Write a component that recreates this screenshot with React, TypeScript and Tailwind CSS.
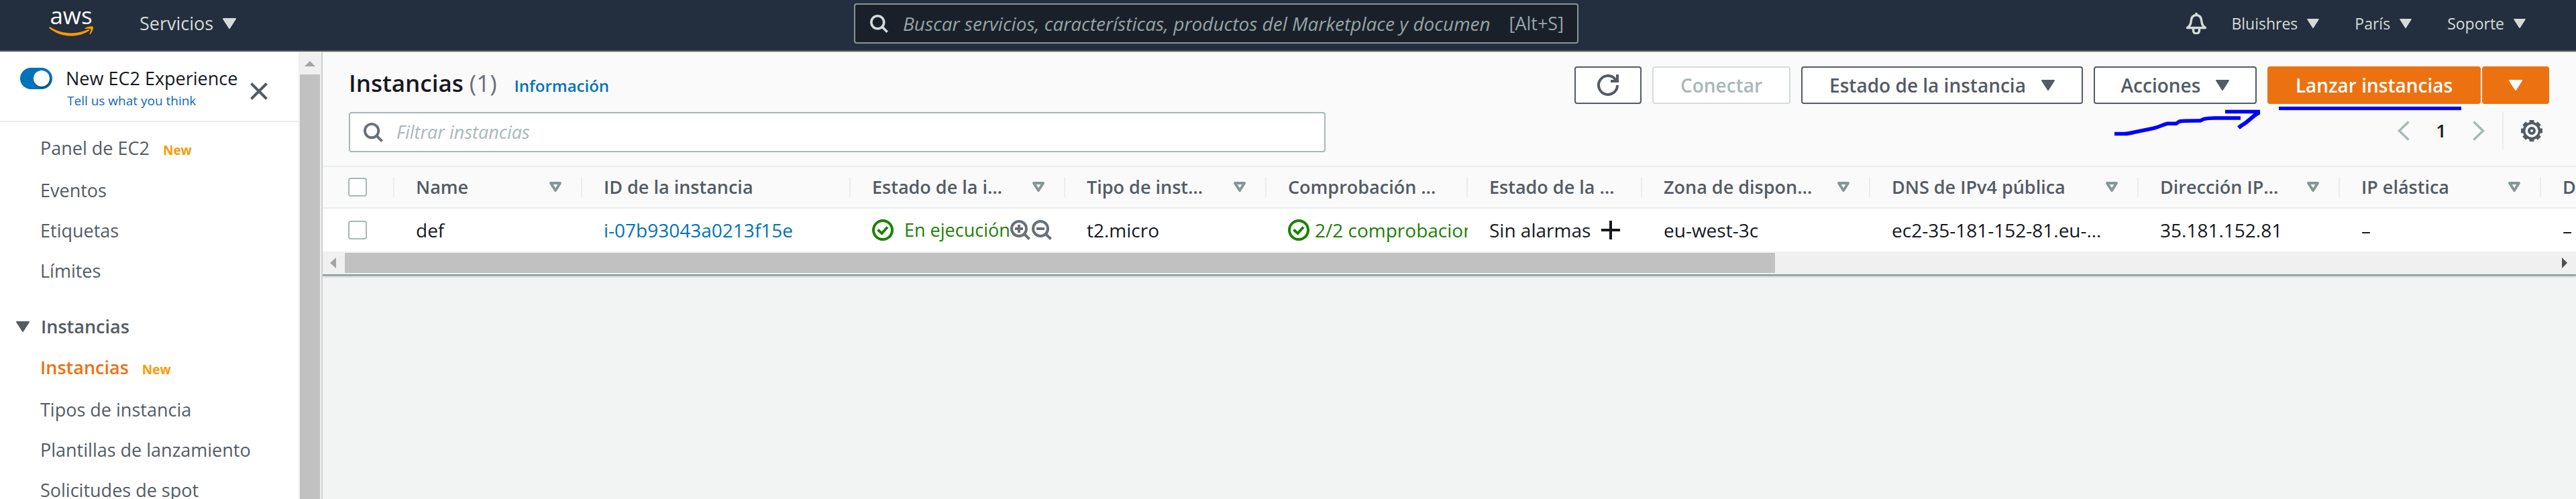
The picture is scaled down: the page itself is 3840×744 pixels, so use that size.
import type { ReactNode } from "react";

function Caret({ className = "" }: { className?: string }) {
  return (
    <svg viewBox="0 0 20 16" className={className} fill="currentColor" stroke="currentColor" strokeWidth="2" strokeLinejoin="round" aria-hidden="true">
      <path d="M1 1h18l-9 14z" />
    </svg>
  );
}

function SortIcon() {
  return (
    <svg viewBox="0 0 20 16" className="h-4 w-5 shrink-0 text-[#879596]" fill="none" stroke="currentColor" strokeWidth="4" strokeLinejoin="round" aria-hidden="true">
      <path d="M3 2h14l-7 11z" />
    </svg>
  );
}

function SearchIcon({ className = "" }: { className?: string }) {
  return (
    <svg viewBox="0 0 30 30" className={className} fill="none" stroke="currentColor" strokeWidth="4" aria-hidden="true">
      <circle cx="12.5" cy="12.5" r="10.5" />
      <path d="M20 20l8.5 8.5" />
    </svg>
  );
}

function ZoomIcon({ plus = false }: { plus?: boolean }) {
  return (
    <svg viewBox="0 0 30 30" className="h-[30px] w-[30px]" fill="none" stroke="currentColor" strokeWidth="4" aria-hidden="true">
      <circle cx="13" cy="13" r="11" />
      <path d={plus ? "M7 13h12M13 7v12M20.5 20.5l8 8" : "M7 13h12M20.5 20.5l8 8"} />
    </svg>
  );
}

function StatusOk() {
  return (
    <svg viewBox="0 0 32 32" className="h-8 w-8 shrink-0" fill="none" stroke="currentColor" strokeWidth="4" aria-hidden="true">
      <circle cx="16" cy="16" r="14" />
      <path d="M8.5 15.5l6 5.5 8.5-9.5" />
    </svg>
  );
}

function Bell() {
  return (
    <svg viewBox="0 0 32 32" className="h-8 w-8" fill="none" stroke="currentColor" strokeWidth="3.4" strokeLinejoin="round" aria-hidden="true">
      <path d="M16 0v4" />
      <path d="M2.5 22.5c3-2 5-4 5.500-9C8.500 7 11 3.500 16 3.500S23.500 7 24 13.500c.5 5 2.500 7 5.500 9z" />
      <path d="M11.500 23v3.500a4.500 4.500 0 0 0 9 0V23" />
    </svg>
  );
}

function Gear() {
  const teeth = [0, 45, 90, 135, 180, 225, 270, 315];
  return (
    <svg viewBox="0 0 32 32" className="h-8 w-8" fill="none" stroke="currentColor" aria-hidden="true">
      <circle cx="16" cy="16" r="11.500" strokeWidth="3.600" />
      <circle cx="16" cy="16" r="4" strokeWidth="4" />
      {teeth.map((a) => (
        <path key={a} d="M12.500 1.800h7" strokeWidth="3.600" transform={`rotate(${a} 16 16)`} />
      ))}
    </svg>
  );
}

function Refresh() {
  return (
    <svg viewBox="0 0 32 32" className="h-8 w-8" fill="none" stroke="currentColor" strokeWidth="4" aria-hidden="true">
      <path d="M30 16A14 14 0 1 1 26.500 6.700L29 10" />
      <path d="M30 0v10H20" />
    </svg>
  );
}

function NavMenu({ label, large = false }: { label: string; large?: boolean }) {
  return (
    <button type="button" className={large ? "flex items-center gap-[14px] text-[27px]" : "flex items-center gap-[14px] text-[23px]"}>
      {label}
      <Caret className={large ? "h-4 w-5" : "h-[14px] w-[18px]"} />
    </button>
  );
}

function TopNav() {
  return (
    <header className="flex h-[77px] items-start border-b-2 border-[#545b64] bg-[#232f3e] text-[#d5dbdb]">
      <div className="flex flex-[1273_1_0px] items-start">
        <a href="#inicio" aria-label="aws" className="ml-[73px] flex w-[66px] flex-col items-center pt-[7px]">
          <span className="text-[35px] leading-8 font-medium text-white">aws</span>
          <svg viewBox="0 0 66 16" className="h-4 w-[66px]" fill="#ff9900" aria-hidden="true">
            <path d="M0 2.500C.2 1 1.200.8 2.500 1.600 20 13 42 12.500 58 5c2-.8 3 .8 1.500 2C43 18 17 17.500 0 2.500z" />
            <path d="M53.500 3c3.500-3 11.500-3.500 12.300-2 .7 1.800-1 8.500-4.300 11-.7.500-1.400.2-1-.6 1-2.400 2.500-6 1.800-7-.9-1-4.800-.6-7.800-.4-1 .1-1.400-.5-1-1z" />
          </svg>
        </a>
        <div className="ml-[69px] flex h-[70px] items-center">
          <NavMenu label="Servicios" large />
        </div>
      </div>
      <label className="mt-[5px] flex h-[60px] w-[1080px] items-center rounded-[4px] border-2 border-[#879596] bg-[#1a2029] pr-[20px] pl-[22px]">
        <SearchIcon className="h-[27px] w-[27px] shrink-0 text-[#d5dbdb]" />
        <input
          type="text"
          aria-label="Buscar servicios"
          placeholder="Buscar servicios, características, productos del Marketplace y documentos"
          className="ml-[22px] min-w-0 flex-1 bg-transparent text-[28px] outline-none placeholder:text-[#95a5a6] placeholder:italic"
        />
        <span className="ml-7 text-[27px] text-[#95a5a6]">[Alt+S]</span>
      </label>
      <nav className="flex-[1487_1_0px]">
        <div className="flex h-[70px] items-center justify-end pr-[75px]">
          <button type="button" aria-label="Notificaciones" className="mr-[36px]">
            <Bell />
          </button>
          <div className="flex gap-[53px]">
            <NavMenu label="Bluishres" />
            <NavMenu label="París" />
            <NavMenu label="Soporte" />
          </div>
        </div>
      </nav>
    </header>
  );
}

function SideLink({ label, isNew = false, active = false }: { label: string; isNew?: boolean; active?: boolean }) {
  return (
    <li className={isNew ? "h-[63px] leading-[60px]" : "h-[60px] leading-[60px]"}>
      <a href={`#${label}`} className={active ? "font-semibold text-[#ec7211]" : "text-[#545b64]"}>
        {label}
      </a>
      {isNew && <span className="ml-[20px] text-[19px] font-bold text-[#ff9900]">New</span>}
    </li>
  );
}

function Sidebar() {
  return (
    <div className="flex w-[481px] shrink-0 border-r-2 border-[#ced3d3] bg-white">
      <aside className="min-w-0 flex-1 whitespace-nowrap">
        <div className="flex h-[105px] border-b-2 border-[#eaeded] pt-6 pl-[30px]">
          <label className="relative h-8 w-12 shrink-0">
            <input type="checkbox" defaultChecked aria-label="New EC2 Experience" className="peer sr-only" />
            <span className="flex h-8 w-12 justify-end rounded-full bg-[#0073bb] p-1">
              <span className="h-6 w-6 rounded-full bg-white shadow-[1px_2px_2px_#00456f]" />
            </span>
          </label>
          <div className="ml-5">
            <p className="text-[27px] leading-8 text-[#16191f]">New EC2 Experience</p>
            <a href="#opinion" className="block pl-[2px] text-[19px] leading-[34px] text-[#1166bb]">
              Tell us what you think
            </a>
          </div>
          <button type="button" aria-label="Cerrar" className="mt-[22px] mr-[46px] ml-auto h-[26px] w-[26px] text-[#545b64]">
            <svg viewBox="0 0 26 26" className="h-[26px] w-[26px]" fill="none" stroke="currentColor" strokeWidth="4" aria-hidden="true">
              <path d="M1.500 1.500l23 23M24.500 1.500l-23 23" />
            </svg>
          </button>
        </div>
        <nav className="text-[27px]">
          <ul className="pt-[9px] pl-[60px]">
            <SideLink label="Panel de EC2" isNew />
            <SideLink label="Eventos" />
            <SideLink label="Etiquetas" />
            <SideLink label="Límites" />
          </ul>
          <button type="button" className="mt-[22px] flex h-[62px] items-center gap-[17px] pl-6 font-semibold text-[#545b64]">
            <Caret className="h-4 w-5" />
            Instancias
          </button>
          <ul className="pl-[60px]">
            <SideLink label="Instancias" isNew active />
            <SideLink label="Tipos de instancia" />
            <SideLink label="Plantillas de lanzamiento" />
            <SideLink label="Solicitudes de spot" />
          </ul>
        </nav>
      </aside>
      <div className="flex w-[34px] flex-col items-center bg-[#f0f0f0]">
        <svg viewBox="0 0 16 8" className="mt-[14px] mb-3 h-2 w-4" fill="#a3a3a3" aria-hidden="true">
          <path d="M8 0l8 8H0z" />
        </svg>
        <div className="w-[30px] flex-1 bg-[#c1c1c1]" />
      </div>
    </div>
  );
}

function ActionButton({ children, disabled = false, label, className }: { children: ReactNode; disabled?: boolean; label?: string; className: string }) {
  return (
    <button
      type="button"
      disabled={disabled}
      aria-label={label}
      className={
        (disabled ? "border-[#d5dbdb] text-[#aab7b8] " : "border-[#545b64] text-[#545b64] ") +
        "flex h-14 items-center justify-center gap-[23px] rounded-[4px] border-2 bg-white text-[28px] font-semibold whitespace-nowrap " +
        className
      }
    >
      {children}
    </button>
  );
}

function Chevron({ next = false }: { next?: boolean }) {
  return (
    <svg viewBox="0 0 18 30" className="h-[30px] w-[18px]" fill="none" stroke="#aab7b8" strokeWidth="3.500" aria-hidden="true">
      <path d={next ? "M1.500 1.500L15.500 15l-14 13.500" : "M16.500 1.500L2.500 15l14 13.500"} />
    </svg>
  );
}

function PanelHeader() {
  return (
    <div className="bg-[#fafafa] pr-10 pl-[39px]">
      <div className="relative flex h-[88px] items-start justify-between pt-5">
        <h1 className="flex items-baseline text-[35px] leading-[50px] font-semibold text-[#16191f]">
          Instancias
          <span className="ml-[9px] font-normal text-[#687078]">(1)</span>
          <a href="#info" className="ml-[26px] text-[24px] text-[#0073bb]">
            Información
          </a>
        </h1>
        <div className="flex gap-4">
          <ActionButton label="Actualizar" className="w-[100px]">
            <Refresh />
          </ActionButton>
          <ActionButton disabled className="w-[206px]">
            Conectar
          </ActionButton>
          <ActionButton className="w-[420px]">
            Estado de la instancia
            <Caret className="h-4 w-5" />
          </ActionButton>
          <ActionButton className="w-[243px]">
            Acciones
            <Caret className="h-4 w-5" />
          </ActionButton>
          <div className="flex gap-[2px] text-white">
            <button type="button" className="h-14 w-[318px] rounded-[4px] bg-[#ec7211] text-[28px] font-semibold whitespace-nowrap">
              Lanzar instancias
            </button>
            <button type="button" aria-label="Más opciones de lanzamiento" className="flex h-14 w-[100px] items-center justify-center rounded-[4px] bg-[#ec7211]">
              <Caret className="h-4 w-5" />
            </button>
          </div>
        </div>
        <svg viewBox="0 0 520 46" className="absolute top-[80px] right-[130px] h-[46px] w-[520px]" fill="none" stroke="#0000ff" strokeWidth="5.500" aria-hidden="true">
          <path d="M247 2.500h272" />
          <path d="M2 40.500h14c6 0 10-1 16-2.500l27-5.500c10-2 14-5.500 22-7.200h13l5-3.300c8-1.200 20-1 31-1l5-2.500c9-2 15-1.500 22-1.500h33" />
          <path d="M167 7.500h52" />
          <path d="M218 8.500l-7 4.500-12 10c-5 4-7 4-12 8.500" strokeWidth="6" />
        </svg>
      </div>
      <div className="flex h-[80px] items-start justify-between">
        <label className="flex h-[60px] w-[1456px] items-center rounded-[4px] border-2 border-[#aab7b8] bg-white px-5">
          <SearchIcon className="h-[29px] w-[29px] shrink-0 text-[#687078]" />
          <input
            type="text"
            aria-label="Filtrar instancias"
            placeholder="Filtrar instancias"
            className="ml-[20px] min-w-0 flex-1 bg-transparent text-[27px] outline-none placeholder:text-[#aab7b8] placeholder:italic"
          />
        </label>
        <div className="flex h-14 items-center pr-[10px]">
          <button type="button" aria-label="Página anterior">
            <Chevron />
          </button>
          <button type="button" className="w-[94px] text-[27px] font-semibold text-[#16191f]">
            1
          </button>
          <button type="button" aria-label="Página siguiente">
            <Chevron next />
          </button>
          <div className="ml-[26px] h-14 w-[2px] bg-[#eaeded]" />
          <button type="button" aria-label="Preferencias" className="ml-[26px] text-[#545b64]">
            <Gear />
          </button>
        </div>
      </div>
    </div>
  );
}

const columns: { label: string; width: string; sort: boolean }[] = [
  { label: "Name", width: "w-[280px]", sort: true },
  { label: "ID de la instancia", width: "w-[400px]", sort: false },
  { label: "Estado de la i…", width: "w-[320px]", sort: true },
  { label: "Tipo de inst…", width: "w-[300px]", sort: true },
  { label: "Comprobación …", width: "w-[300px]", sort: false },
  { label: "Estado de la …", width: "w-[260px]", sort: false },
  { label: "Zona de dispon…", width: "w-[340px]", sort: true },
  { label: "DNS de IPv4 pública", width: "w-[400px]", sort: true },
  { label: "Dirección IP…", width: "w-[300px]", sort: true },
  { label: "IP elástica", width: "w-[300px]", sort: true },
  { label: "D", width: "w-[300px]", sort: false },
];

const cells: ReactNode[] = [
  "def",
  <a href="#i-07b93043a0213f15e" className="text-[#0073bb]">
    i-07b93043a0213f15e
  </a>,
  <span className="flex items-center text-[#1d8102]">
    <StatusOk />
    <span className="ml-4 text-[27px]">En ejecución</span>
    <span className="flex gap-[2px] text-[#687078]">
      <button type="button" aria-label="Incluir en el filtro">
        <ZoomIcon plus />
      </button>
      <button type="button" aria-label="Excluir del filtro">
        <ZoomIcon />
      </button>
    </span>
  </span>,
  "t2.micro",
  <span className="flex items-center gap-2 text-[#1d8102]">
    <StatusOk />
    2/2 comprobaciones
  </span>,
  <span className="flex items-center gap-4">
    Sin alarmas
    <button type="button" aria-label="Agregar alarma">
      <svg viewBox="0 0 28 28" className="h-7 w-7" stroke="currentColor" strokeWidth="4" aria-hidden="true">
        <path d="M0 14h28M14 0v28" />
      </svg>
    </button>
  </span>,
  "eu-west-3c",
  "ec2-35-181-152-81.eu-…",
  "35.181.152.81",
  "–",
  "–",
];

function Box({ label }: { label: string }) {
  return <input type="checkbox" aria-label={label} className="block h-7 w-7 appearance-none rounded-[4px] border-2 border-[#aab7b8] bg-white" />;
}

function InstanceTable() {
  return (
    <div className="overflow-hidden">
      <table className="w-[3607px] table-fixed border-separate border-spacing-0 whitespace-nowrap">
        <thead>
          <tr className="bg-[#fafafa] text-left text-[27px] text-[#545b64]">
            <th className="h-16 w-[107px] border-y-2 border-[#eaeded] p-0">
              <div className="flex h-[30px] items-center border-r-2 border-[#eaeded] pl-[38px]">
                <Box label="Seleccionar todo" />
              </div>
            </th>
            {columns.map((c) => (
              <th key={c.label} className={"h-16 border-y-2 border-[#eaeded] p-0 font-semibold " + c.width}>
                <div className="flex h-[30px] items-center justify-between border-r-2 border-[#eaeded] pr-[28px] pl-8">
                  {c.label}
                  {c.sort && <SortIcon />}
                </div>
              </th>
            ))}
          </tr>
        </thead>
        <tbody>
          <tr className="bg-white text-[28px] leading-10 text-[#16191f]">
            <td className="h-16 p-0 pl-[38px]">
              <Box label="Seleccionar def" />
            </td>
            {cells.map((cell, i) => (
              <td key={columns[i].label} className="h-16 overflow-hidden p-0 pl-8">
                {cell}
              </td>
            ))}
          </tr>
        </tbody>
      </table>
    </div>
  );
}

function HorizontalScrollbar() {
  return (
    <div className="flex h-[34px] items-center justify-between bg-[#f0f0f0] pr-[13px] pl-[11px]">
      <svg viewBox="0 0 9 16" className="mr-[13px] h-4 w-[9px]" fill="#a3a3a3" aria-hidden="true">
        <path d="M9 0v16L0 8z" />
      </svg>
      <div className="min-w-0 flex-1">
        <div className="h-[30px] w-[64.5%] bg-[#c1c1c1]" />
      </div>
      <svg viewBox="0 0 8 16" className="h-4 w-2" fill="#505050" aria-hidden="true">
        <path d="M0 0v16l8-8z" />
      </svg>
    </div>
  );
}

export default function App() {
  return (
    <div className="flex h-screen flex-col overflow-hidden bg-[#f2f3f3] font-['Open_Sans',sans-serif]">
      <TopNav />
      <div className="flex min-h-0 flex-1 overflow-hidden">
        <Sidebar />
        <main className="min-w-0 flex-1">
          <section className="border-t-2 border-b-2 border-t-[#eaeded] border-b-[#879596] shadow-[0_2px_2px_#c3caca]">
            <PanelHeader />
            <InstanceTable />
            <HorizontalScrollbar />
          </section>
        </main>
      </div>
    </div>
  );
}
